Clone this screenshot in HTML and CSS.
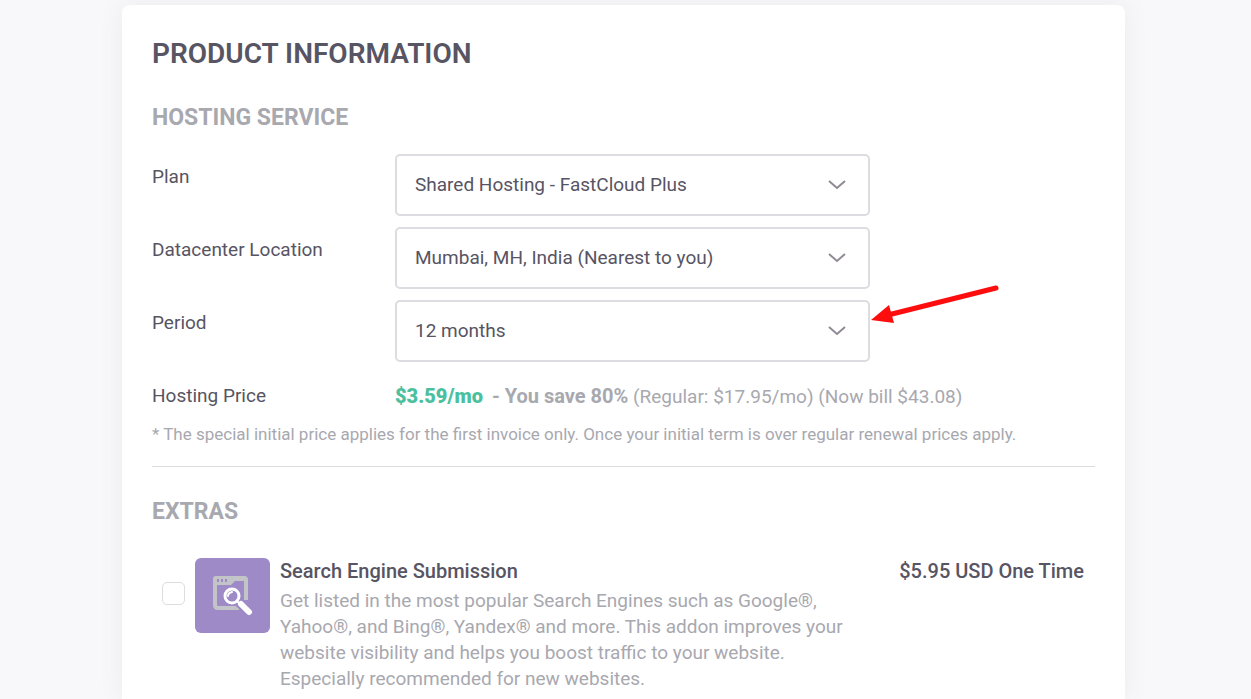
FILE: index.html
```html
<!DOCTYPE html>
<html lang="en">
<head>
<meta charset="utf-8">
<meta name="viewport" content="width=device-width, initial-scale=1">
<title>Product Information</title>
<link rel="stylesheet" href="styles.css">
</head>
<body>
<main class="card">
  <h1 class="title">PRODUCT INFORMATION</h1>

  <section class="hosting">
    <h2 class="heading">HOSTING SERVICE</h2>
    <div class="fields">
      <div class="field">
        <label class="label" for="plan">Plan</label>
        <div class="control">
          <select class="select" id="plan"><option>Shared Hosting - FastCloud Plus</option></select>
          <svg class="chevron" viewBox="0 0 18 10" aria-hidden="true"><path d="M1 1l8 7 8-7"/></svg>
        </div>
      </div>
      <div class="field">
        <label class="label" for="location">Datacenter Location</label>
        <div class="control">
          <select class="select" id="location"><option>Mumbai, MH, India (Nearest to you)</option></select>
          <svg class="chevron" viewBox="0 0 18 10" aria-hidden="true"><path d="M1 1l8 7 8-7"/></svg>
        </div>
      </div>
      <div class="field">
        <label class="label" for="period">Period</label>
        <div class="control">
          <select class="select" id="period"><option>12 months</option></select>
          <svg class="chevron" viewBox="0 0 18 10" aria-hidden="true"><path d="M1 1l8 7 8-7"/></svg>
          <svg class="arrow" viewBox="0 0 130 42" aria-hidden="true"><path class="arrow-line" d="M126 4L18 31"/><path class="arrow-head" d="M1 36L19 21L24 39Z"/></svg>
        </div>
      </div>
      <div class="field">
        <span class="label">Hosting Price</span>
        <p class="price"><strong class="amount">$3.59/mo</strong><strong class="saving">- You save 80%</strong> (Regular: $17.95/mo) (Now bill $43.08)</p>
      </div>
    </div>
    <p class="note">* The special initial price applies for the first invoice only. Once your initial term is over regular renewal prices apply.</p>
  </section>

  <section class="extras">
    <h2 class="heading">EXTRAS</h2>
    <div class="extra">
      <input class="check" type="checkbox" id="submission">
      <svg class="icon" viewBox="0 0 75 75" aria-hidden="true">
        <rect width="75" height="75" rx="6" fill="#9d8ac7"/>
        <path d="M44 50H23q-3 0-3-3V22q0-2 3-2h14M51 42V23q0-3-3-3H38" fill="none" stroke="#c3c4c8" stroke-width="4"/>
        <path d="M18 27v-6q0-3 3-3h28q4 0 4 4v1H40l-4 4z" fill="#c3c4c8"/>
        <path d="M22 21h2v3h-2zM26 21h2v3h-2zM30 21h2v3h-2z" fill="#9d8ac7"/>
        <circle cx="37" cy="38" r="10" fill="#9d8ac7"/>
        <path d="M43 44l11 10" stroke="#9d8ac7" stroke-width="9" stroke-linecap="round"/>
        <circle cx="37" cy="38" r="7" fill="none" stroke="#fff" stroke-width="3"/>
        <path d="M33 38q0-3 4-4" fill="none" stroke="#fff" stroke-width="2" stroke-linecap="round"/>
        <path d="M42 43l4 4" stroke="#fff" stroke-width="2"/>
        <path d="M46 46l8 8" stroke="#fff" stroke-width="6" stroke-linecap="round"/>
      </svg>
      <div class="details">
        <label class="name" for="submission">Search Engine Submission</label>
        <p class="text">Get listed in the most popular Search Engines such as Google®,<br>Yahoo®, and Bing®, Yandex® and more. This addon improves your<br>website visibility and helps you boost traffic to your website.<br>Especially recommended for new websites.</p>
      </div>
      <strong class="cost">$5.95 USD One Time</strong>
    </div>
  </section>
</main>
</body>
</html>
```
FILE: styles.css
```css
* {
  box-sizing: border-box;
}

body {
  display: flex;
  min-height: 100vh;
  margin: 0;
  padding: 5px 126px 0 122px;
  background: #f8f8fb;
  color: #575463;
  font: 400 19px/26px Roboto, sans-serif;
}

h1, h2, p {
  margin: 0;
}

.card {
  flex: 1;
  min-width: 0;
  padding: 30px 30px 0;
  border-radius: 8px 8px 0 0;
  background: #fff;
  box-shadow: 0 0 24px #ebebee;
}

.title {
  font-size: 28px;
  font-weight: 600;
  line-height: 38px;
}

.heading {
  color: #a8a8af;
  font-size: 23px;
  font-weight: 700;
  line-height: 30px;
}

.hosting {
  padding: 30px 0 19px;
  border-bottom: 1px solid #dcdcdf;
}

.fields {
  display: grid;
  gap: 11px;
  margin-top: 21px;
}

.field {
  display: grid;
  grid-template-columns: 243px minmax(0, 1fr);
}

.label {
  padding-top: 10px;
}

.control {
  position: relative;
  max-width: 475px;
}

.select {
  display: block;
  width: 100%;
  height: 62px;
  padding: 0 48px 0 18px;
  border: 2px solid #dcdce1;
  border-radius: 5px;
  appearance: none;
  background: #fff;
  color: inherit;
  font: inherit;
}

.chevron {
  position: absolute;
  top: 26px;
  right: 24px;
  width: 18px;
  height: 10px;
  fill: none;
  stroke: #8f8a95;
  stroke-width: 2;
  pointer-events: none;
}

.arrow {
  position: absolute;
  top: -16px;
  left: 100%;
  width: 130px;
  height: 42px;
  pointer-events: none;
}

.arrow-line {
  fill: none;
  stroke: #fd0d0d;
  stroke-width: 5;
  stroke-linecap: round;
}

.arrow-head {
  fill: #fd0d0d;
}

.price {
  padding-top: 10px;
  color: #a8a8af;
}

.amount,
.saving,
.name,
.cost {
  font-size: 20px;
}

.amount {
  margin-right: 9px;
  color: #4bc09f;
  font-weight: 900;
}

.note {
  margin-top: 11px;
  color: #a8a8af;
  font-size: 17px;
}

.extras {
  padding-top: 30px;
}

.extra {
  display: flex;
  align-items: flex-start;
  padding: 31px 11px 0 10px;
}

.check {
  flex: none;
  width: 23px;
  height: 23px;
  margin: 24px 10px 0 0;
  border: 1px solid #dcdce1;
  border-radius: 5px;
  appearance: none;
  background: #fff;
}

.check:checked {
  background: #9d8ac7;
}

.icon {
  flex: none;
  width: 75px;
  height: 75px;
  margin-right: 10px;
}

.details {
  flex: 1;
  min-width: 0;
}

.name {
  display: block;
  font-weight: 500;
}

.text {
  margin-top: 4px;
  color: #a8a8af;
}

.cost {
  font-weight: 500;
}
```
